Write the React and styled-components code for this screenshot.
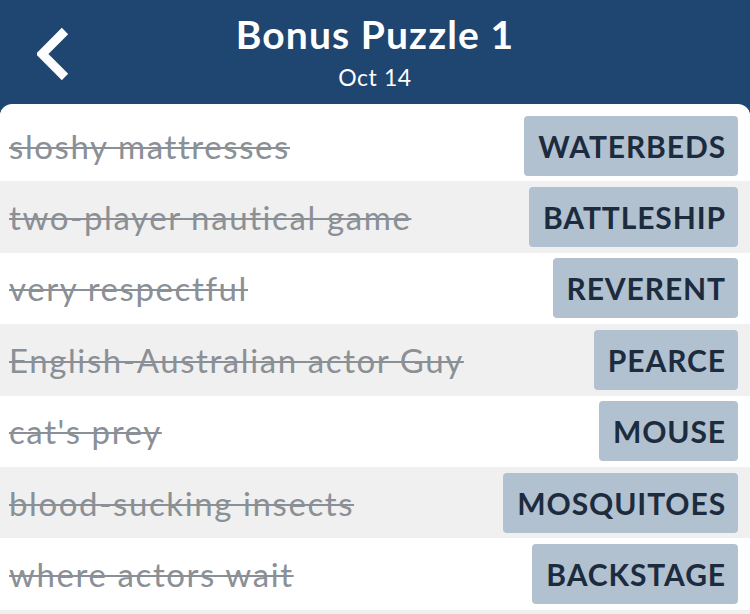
import React from 'react';
import styled, { createGlobalStyle } from 'styled-components';

const GlobalStyle = createGlobalStyle`
  html, body {
    margin: 0;
    padding: 0;
    background: #1f4571;
  }
  * {
    box-sizing: border-box;
  }
`;

const Screen = styled.div`
  width: 750px;
  height: 614px;
  overflow: hidden;
  background: #1f4571;
  font-family: 'Lato', 'Noto Sans', sans-serif;
  display: flex;
  flex-direction: column;
`;

const Header = styled.header`
  height: 104px;
  flex-shrink: 0;
  display: grid;
  grid-template-columns: 100px 1fr 100px;
  align-items: center;
  color: #ffffff;
`;

const BackButton = styled.button`
  border: none;
  background: none;
  padding: 0;
  margin-left: 34px;
  width: 40px;
  height: 56px;
  display: flex;
  align-items: center;
  justify-content: center;
  cursor: pointer;
`;

const TitleBlock = styled.div`
  display: flex;
  flex-direction: column;
  align-items: center;
  padding-bottom: 2px;
`;

const Title = styled.h1`
  margin: 0;
  font-size: 39px;
  font-weight: 700;
  line-height: 44px;
  letter-spacing: 1.1px;
`;

const Subtitle = styled.div`
  font-size: 23px;
  line-height: 26px;
  margin-top: 8px;
  letter-spacing: 0.6px;
`;

const Card = styled.main`
  flex: 1;
  background: #ffffff;
  border-radius: 12px 12px 0 0;
  padding-top: 6px;
  overflow: hidden;
`;

const Row = styled.div`
  height: 71.4px;
  display: flex;
  align-items: center;
  justify-content: space-between;
  padding: 0 12px 0 9px;
  background: ${(props) => (props.shaded ? '#f0f0f0' : '#ffffff')};
`;

const Clue = styled.span`
  font-size: 33px;
  color: #8a9096;
  letter-spacing: 1.6px;
  text-decoration: line-through;
  text-decoration-thickness: 2px;
  white-space: nowrap;
`;

const Answer = styled.span`
  height: 60px;
  display: flex;
  align-items: center;
  padding: 0 12px 0 14px;
  border-radius: 4px;
  background: #b1c1cf;
  color: #1c2b3d;
  font-size: 30px;
  font-weight: 700;
  letter-spacing: 0.9px;
`;

const entries = [
  ['sloshy mattresses', 'WATERBEDS'],
  ['two-player nautical game', 'BATTLESHIP'],
  ['very respectful', 'REVERENT'],
  ['English-Australian actor Guy', 'PEARCE'],
  ["cat's prey", 'MOUSE'],
  ['blood-sucking insects', 'MOSQUITOES'],
  ['where actors wait', 'BACKSTAGE'],
  ['', ''],
];

const Chevron = () => (
  <svg width="34" height="56" viewBox="0 0 34 56">
    <path
      d="M28 7 L5 30 L28 53"
      fill="none"
      stroke="#ffffff"
      strokeWidth="9"
      strokeLinecap="butt"
    />
  </svg>
);

export default function App() {
  return (
    <Screen>
      <GlobalStyle />
      <Header>
        <BackButton aria-label="Back">
          <Chevron />
        </BackButton>
        <TitleBlock>
          <Title>Bonus Puzzle 1</Title>
          <Subtitle>Oct 14</Subtitle>
        </TitleBlock>
        <div />
      </Header>
      <Card>
        {entries.map(([clue, answer], i) => (
          <Row key={i} shaded={i % 2 === 1}>
            <Clue>{clue}</Clue>
            {answer && <Answer>{answer}</Answer>}
          </Row>
        ))}
      </Card>
    </Screen>
  );
}
